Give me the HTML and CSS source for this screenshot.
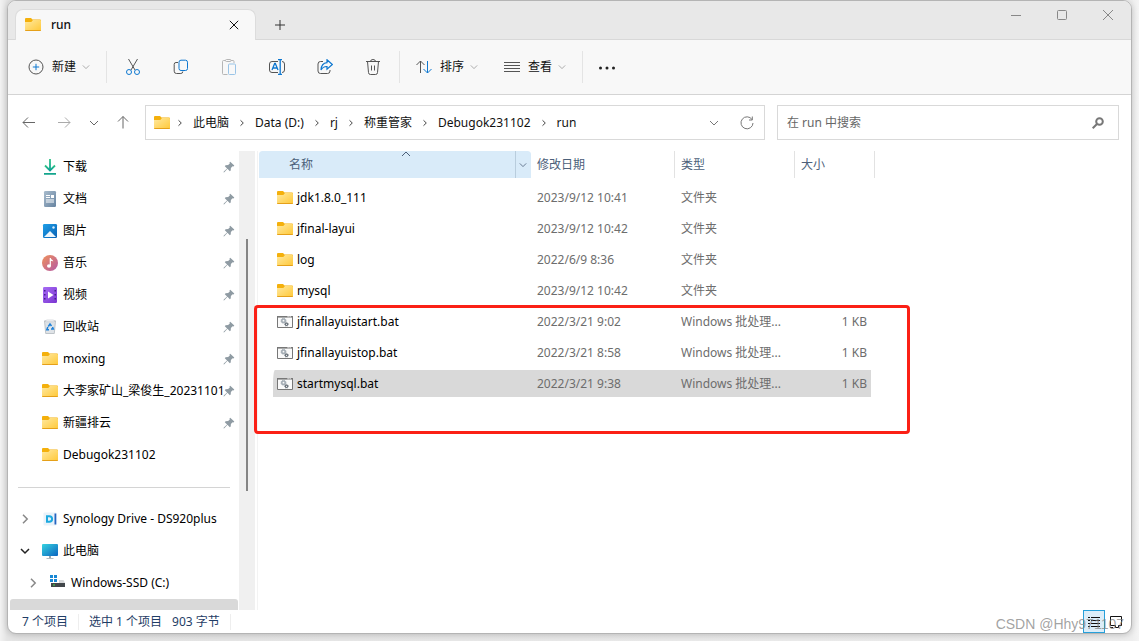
FILE: index.html
```html
<!DOCTYPE html>
<html lang="zh-CN">
<head>
<meta charset="utf-8">
<title>run</title>
<link rel="stylesheet" href="styles.css">
</head>
<body>
<svg class="defs" aria-hidden="true">
  <defs>
    <linearGradient id="gFolder" x1="0" y1="0" x2="1" y2="1"><stop offset="0" stop-color="#ffe9a0"/><stop offset="1" stop-color="#ffc837"/></linearGradient>
    <linearGradient id="gDown" x1="0" y1="0" x2="0" y2="1"><stop offset="0" stop-color="#2fc486"/><stop offset="1" stop-color="#0f9f96"/></linearGradient>
    <linearGradient id="gDoc" x1="0" y1="0" x2="1" y2="1"><stop offset="0" stop-color="#a9bccd"/><stop offset="1" stop-color="#6683a0"/></linearGradient>
    <linearGradient id="gPic" x1="0" y1="0" x2="1" y2="1"><stop offset="0" stop-color="#1fa0e8"/><stop offset="1" stop-color="#0860b4"/></linearGradient>
    <linearGradient id="gMusic" x1="0" y1="0" x2="1" y2="1"><stop offset="0" stop-color="#f0915a"/><stop offset="1" stop-color="#b45aa6"/></linearGradient>
    <linearGradient id="gVideo" x1="0" y1="0" x2="1" y2="1"><stop offset="0" stop-color="#a76cf5"/><stop offset="1" stop-color="#7a35d0"/></linearGradient>
    <linearGradient id="gPc" x1="0" y1="0" x2="1" y2="1"><stop offset="0" stop-color="#35d3e0"/><stop offset="1" stop-color="#0c64c0"/></linearGradient>
    <symbol id="folder" viewBox="0 0 16 16"><path d="M0 2a1 1 0 0 1 1-1h5l1.500 1.500H15a1 1 0 0 1 1 1V12H0z" fill="#f4b00c"/><path d="M0 5h6.300L8 3h7a1 1 0 0 1 1 1v9a1 1 0 0 1-1 1H1a1 1 0 0 1-1-1z" fill="url(#gFolder)"/><path d="M0 13h16a1 1 0 0 1-1 1H1a1 1 0 0 1-1-1z" fill="#e5a019"/></symbol>
    <symbol id="pin" viewBox="0 0 12 12"><path d="M7.2.8 11.3 4.6 10.5 5.4 9.6 5.2 7.9 7 7.7 9.4 6.8 10.2 4.5 7.8 1.3 11.2.5 11.5.8 10.6 4.1 7.4 1.8 5.2 2.6 4.3 5.1 4.1 6.8 2.4 6.5 1.5z" fill="#8f9ba3"/></symbol>
    <symbol id="right" viewBox="0 0 10 10"><path d="M3 .8 7.2 5 3 9.2"/></symbol>
    <symbol id="crumb" viewBox="0 0 8 8"><path d="M2.500 1.300 5.300 4 2.500 6.700"/></symbol>
    <symbol id="down" viewBox="0 0 10 10"><path d="M1 3l4 4 4-4"/></symbol>
    <symbol id="bat" viewBox="0 0 16 16"><path d="M.5 2.500h15v11H.5z" fill="#fafafa" stroke="#777"/><path d="M0 2h16v1.600H0z" fill="#777"/><path d="M10.500 2.300h1.200v1h-1.200zM12.500 2.300h1.200v1h-1.200z" fill="#fff"/><circle cx="6.500" cy="6.700" r="1.700" fill="none" stroke="#a4adb5" stroke-width="1.600"/><circle cx="6.500" cy="6.700" r="2.500" fill="none" stroke="#a4adb5" stroke-dasharray="1 1"/><circle cx="9.500" cy="10.300" r="1.200" fill="none" stroke="#6b747c" stroke-width="1.200"/><circle cx="9.500" cy="10.300" r="1.900" fill="none" stroke="#6b747c" stroke-width=".7" stroke-dasharray=".8 .8"/></symbol>
  </defs>
</svg>

<div class="window">
  <header class="titlebar">
    <div class="tab">
      <svg class="icon"><use href="#folder"/></svg>
      <span class="tab-title">run</span>
      <button class="plain" aria-label="关闭标签页"><svg class="line small" viewBox="0 0 10 10"><path d="M.8.8l8.400 8.400M9.200.8.8 9.200"/></svg></button>
    </div>
    <button class="plain new-tab" aria-label="新标签页"><svg class="line small" viewBox="0 0 10 10"><path d="M5 0v10M0 5h10"/></svg></button>
    <div class="controls">
      <button class="plain" aria-label="最小化"><svg class="line small" viewBox="0 0 10 10"><path d="M0 5.500h10"/></svg></button>
      <button class="plain" aria-label="最大化"><svg class="line small" viewBox="0 0 10 10"><rect x=".5" y=".5" width="9" height="9" rx="1"/></svg></button>
      <button class="plain" aria-label="关闭"><svg class="line small" viewBox="0 0 10 10"><path d="M0 0l10 10M10 0 0 10"/></svg></button>
    </div>
  </header>

  <div class="toolbar">
    <button class="tool labelled new"><svg class="line" viewBox="0 0 16 16"><circle cx="8" cy="8" r="7"/><path class="blue" d="M8 4.800v6.400M4.800 8h6.400"/></svg>新建<svg class="line tiny"><use href="#down"/></svg></button>
    <div class="tools">
      <button class="tool" aria-label="剪切"><svg class="line" viewBox="0 0 16 16"><path d="M3.500 0 10 11M12.500 0 6 11"/><g class="blue"><circle cx="4" cy="13" r="2.500"/><circle cx="12" cy="13" r="2.500"/></g></svg></button>
      <button class="tool" aria-label="复制"><svg class="line" viewBox="0 0 16 16"><path d="M5 3.500H3A1.800 1.800 0 0 0 1.200 5.300v6.900A2.300 2.300 0 0 0 3.500 14.500h4.300a2 2 0 0 0 2-2"/><rect class="blue" x="6" y="1.200" width="8.500" height="10.300" rx="2"/></svg></button>
      <button class="tool" aria-label="粘贴" disabled><svg class="line" viewBox="0 0 16 16"><path d="M6.500 15.500h-4a1 1 0 0 1-1-1v-12a1 1 0 0 1 1-1h2M10 1.500h2a1 1 0 0 1 1 1V4"/><rect x="4.500" y=".5" width="5.500" height="2" rx="1"/><rect class="blue" x="7.500" y="5" width="7" height="10.500" rx="1"/></svg></button>
      <button class="tool" aria-label="重命名"><svg class="line" viewBox="0 0 16 16"><path d="M9 2.500H3A2.500 2.500 0 0 0 .500 5v6A2.500 2.500 0 0 0 3 13.500h6M13 2.500a2.500 2.500 0 0 1 2.500 2.500v6a2.500 2.500 0 0 1-2.500 2.500"/><path class="blue" stroke-width="1.300" d="M3 11l2.700-6.500h.6L9 11M4 9h4M9 .500h4M9 15.500h4M11.200.5v15"/></svg></button>
      <button class="tool" aria-label="共享"><svg class="line" viewBox="0 0 16 16"><path d="M6 2.500H3.500A2.500 2.500 0 0 0 1 5v7a2.500 2.500 0 0 0 2.500 2.500h7A2.500 2.500 0 0 0 13 12v-1"/><path class="blue" stroke-width="1.200" d="M10 .8 15.300 5.500 10 10.200V7.500C7.500 7.300 5.500 8.500 4 11 4.200 7 6 3.900 10 3.600z"/></svg></button>
      <button class="tool" aria-label="删除"><svg class="line" viewBox="0 0 16 16"><path d="M1 2.500h14M5.500 2.500a2.500 2 0 0 1 5 0M2.500 2.500l1 11a2 2 0 0 0 2 2h5a2 2 0 0 0 2-2l1-11M6.500 6.500v5M9.500 6.500v5"/></svg></button>
    </div>
    <div class="views">
      <button class="tool labelled"><svg class="line" viewBox="0 0 16 16"><path d="M4.500 14V2M.5 6l4-4 4 4"/><path class="blue" d="M11.500 2v12M7.500 10l4 4 4-4"/></svg>排序<svg class="line tiny"><use href="#down"/></svg></button>
      <button class="tool labelled"><svg class="line" viewBox="0 0 16 16"><path d="M0 3.500h16M0 6.500h16M0 9.500h16M0 12.500h16"/></svg>查看<svg class="line tiny"><use href="#down"/></svg></button>
    </div>
    <button class="tool more" aria-label="更多"><svg viewBox="0 0 16 16"><circle cx="1.500" cy="9" r="1.500"/><circle cx="8" cy="9" r="1.500"/><circle cx="14.500" cy="9" r="1.500"/></svg></button>
  </div>

  <div class="navbar">
    <nav class="history" aria-label="导航">
      <button class="plain" aria-label="后退"><svg class="line" viewBox="0 0 16 16"><path d="M14 7.500H2M7 2.500l-5 5 5 5"/></svg></button>
      <button class="plain forward" aria-label="前进" disabled><svg class="line" viewBox="0 0 16 16"><path d="M2 7.500h12M9 2.500l5 5-5 5"/></svg></button>
      <button class="plain recent" aria-label="最近"><svg class="line small" viewBox="0 0 10 10"><path d="M1 3l4 4 4-4"/></svg></button>
      <button class="plain up" aria-label="向上"><svg class="line" viewBox="0 0 16 16"><path d="M8 13.500v-12M3 6.500l5-5 5 5"/></svg></button>
    </nav>
    <div class="address">
      <svg class="icon"><use href="#folder"/></svg>
      <svg class="line sep"><use href="#crumb"/></svg><a href="#">此电脑</a>
      <svg class="line sep"><use href="#crumb"/></svg><a href="#">Data (D:)</a>
      <svg class="line sep"><use href="#crumb"/></svg><a href="#">rj</a>
      <svg class="line sep"><use href="#crumb"/></svg><a href="#">称重管家</a>
      <svg class="line sep"><use href="#crumb"/></svg><a href="#">Debugok231102</a>
      <svg class="line sep"><use href="#crumb"/></svg><a href="#">run</a>
      <div class="address-actions">
        <button class="plain" aria-label="历史"><svg class="line small"><use href="#down"/></svg></button>
        <button class="plain" aria-label="刷新"><svg class="line" viewBox="0 0 16 16"><path d="M13 4.500A6 6 0 1 0 14 8M13.300 1.500v3.500H10"/></svg></button>
      </div>
    </div>
    <label class="search">
      <input type="text" placeholder="在 run 中搜索" aria-label="在 run 中搜索">
      <svg class="line" viewBox="0 0 16 16"><g class="thick"><circle cx="9.500" cy="6.500" r="3.300"/><path d="M7 9l-4.300 4.300"/></g></svg>
    </label>
  </div>

  <main class="main">
    <aside class="sidebar">
      <ul class="tree">
        <li><svg class="icon" viewBox="0 0 16 16"><path d="M3 6.500 8 11.500l5-5" fill="none" stroke="url(#gDown)" stroke-width="1.800"/><path d="M7.100 0h1.800v11H7.100z" fill="url(#gDown)"/><path d="M2 14h12v1.800H2z" fill="#13a58d"/></svg><span>下载</span><svg class="pin"><use href="#pin"/></svg></li>
        <li><svg class="icon" viewBox="0 0 16 16"><rect x="2" width="12" height="16" rx="1.200" fill="url(#gDoc)"/><path d="M4 4h4v1H4zM4 6h4v1H4zM9 4h3v3H9zM4 8.500h8v1H4zM4 10.500h8v1H4z" fill="#fff"/></svg><span>文档</span><svg class="pin"><use href="#pin"/></svg></li>
        <li><svg class="icon" viewBox="0 0 16 16"><rect x="1" y="1" width="14" height="14" rx="1.200" fill="url(#gPic)"/><path d="M2 14 8 8l6 6z" fill="#eef7fd"/><circle cx="11.500" cy="4.500" r="1.200" fill="#d8f0ff"/></svg><span>图片</span><svg class="pin"><use href="#pin"/></svg></li>
        <li><svg class="icon" viewBox="0 0 16 16"><circle cx="8" cy="8" r="8" fill="url(#gMusic)"/><ellipse cx="7" cy="11" rx="2" ry="1.700" fill="#fff"/><path d="M7.700 3h1.200c0 2 2.300 1.500 2.300 3.600-1-.7-2-.6-2.300-.6v5H7.700z" fill="#fff"/></svg><span>音乐</span><svg class="pin"><use href="#pin"/></svg></li>
        <li><svg class="icon" viewBox="0 0 16 16"><rect x="1" y="0" width="14" height="16" rx="1.200" fill="url(#gVideo)"/><path d="M2 3h1.500v1.500H2zM2 7h1.500v1.500H2zM2 11h1.500v1.500H2zM12.500 3H14v1.500h-1.500zM12.500 7H14v1.500h-1.500zM12.500 11H14v1.500h-1.500z" fill="#43208a"/><path d="M6 4.500 11.500 8 6 11.500z" fill="#fff"/></svg><span>视频</span><svg class="pin"><use href="#pin"/></svg></li>
        <li><svg class="icon" viewBox="0 0 16 16"><path d="M2.500 2h11l-1.200 12.500H3.700z" fill="#dfe3e7" stroke="#a9b0b6" stroke-width=".7"/><path d="M2.500 2 5 1h6l2.500 1-2 .8h-7z" fill="#f8f9fa" stroke="#b5bbc0" stroke-width=".5"/><path d="M6.300 7.500 8 5l1.500 2M10.500 8l.8 2H9M7 10.800H4.800L5.800 8" fill="none" stroke="#1c80d8" stroke-width="1.500"/></svg><span>回收站</span><svg class="pin"><use href="#pin"/></svg></li>
        <li><svg class="icon"><use href="#folder"/></svg><span>moxing</span><svg class="pin"><use href="#pin"/></svg></li>
        <li><svg class="icon"><use href="#folder"/></svg><span>大李家矿山_梁俊生_20231101</span><svg class="pin"><use href="#pin"/></svg></li>
        <li><svg class="icon"><use href="#folder"/></svg><span>新疆排云</span><svg class="pin"><use href="#pin"/></svg></li>
        <li><svg class="icon"><use href="#folder"/></svg><span>Debugok231102</span></li>
      </ul>
      <hr>
      <ul class="tree drives">
        <li><svg class="line chevron faded"><use href="#right"/></svg><svg class="icon" viewBox="0 0 16 16"><rect x="1.500" y="1.500" width="13" height="13" rx="1" fill="#e9f2f9"/><path d="M12.500 2.500h1.800v11h-1.800z" fill="#2563c0"/><path d="M5 5.200h2.300a2.800 2.800 0 0 1 0 5.600H5z" fill="none" stroke="#1da9df" stroke-width="2"/></svg><span>Synology Drive - DS920plus</span></li>
        <li><svg class="line chevron"><use href="#down"/></svg><svg class="icon" viewBox="0 0 16 16"><rect y="1" width="16" height="12" rx="1" fill="url(#gPc)"/><path d="M7 13h2v2h2.500v.8h-7V15H7z" fill="#9aa5ad"/></svg><span>此电脑</span></li>
        <li class="child"><svg class="line chevron faded"><use href="#right"/></svg><svg class="icon" viewBox="0 0 16 16"><path d="M0 0h3v3H0zM4 0h3v3H4zM0 4h3v3H0zM4 4h3v3H4z" fill="#1787d4"/><path d="M9 5h4.500L15 8H9z" fill="#d5d7d9"/><path d="M1 8h14v4H1z" fill="#41464a"/><path d="M3 9.500h2v1H3z" fill="#45df4b"/></svg><span>Windows-SSD (C:)</span></li>
        <li class="current"></li>
      </ul>
    </aside>
    <div class="scrollbar"><div class="thumb"></div></div>

    <section class="files">
      <table>
        <colgroup><col class="c-name"><col class="c-date"><col class="c-type"><col class="c-size"></colgroup>
        <thead>
          <tr>
            <th class="sorted"><div class="head"><svg class="line sort-mark" viewBox="0 0 10 6"><path d="M1 5l4-4 4 4"/></svg><span>名称</span><button class="plain filter" aria-label="筛选"><svg class="line tiny"><use href="#down"/></svg></button></div></th>
            <th>修改日期</th><th>类型</th><th>大小</th>
          </tr>
        </thead>
        <tbody>
          <tr><td><div class="name"><svg class="icon"><use href="#folder"/></svg>jdk1.8.0_111</div></td><td>2023/9/12 10:41</td><td>文件夹</td><td></td></tr>
          <tr><td><div class="name"><svg class="icon"><use href="#folder"/></svg>jfinal-layui</div></td><td>2023/9/12 10:42</td><td>文件夹</td><td></td></tr>
          <tr><td><div class="name"><svg class="icon"><use href="#folder"/></svg>log</div></td><td>2022/6/9 8:36</td><td>文件夹</td><td></td></tr>
          <tr><td><div class="name"><svg class="icon"><use href="#folder"/></svg>mysql</div></td><td>2023/9/12 10:42</td><td>文件夹</td><td></td></tr>
          <tr><td><div class="name"><svg class="icon"><use href="#bat"/></svg>jfinallayuistart.bat</div></td><td>2022/3/21 9:02</td><td>Windows 批处理...</td><td>1 KB</td></tr>
          <tr><td><div class="name"><svg class="icon"><use href="#bat"/></svg>jfinallayuistop.bat</div></td><td>2022/3/21 8:58</td><td>Windows 批处理...</td><td>1 KB</td></tr>
          <tr class="selected"><td><div class="name"><svg class="icon"><use href="#bat"/></svg>startmysql.bat</div></td><td>2022/3/21 9:38</td><td>Windows 批处理...</td><td>1 KB</td></tr>
        </tbody>
      </table>
      <div class="highlight"></div>
    </section>
  </main>

  <footer class="status">
    <span class="count">7 个项目</span>
    <span class="chosen">选中 1 个项目</span>
    <span class="bytes">903 字节</span>
    <div class="modes">
      <button class="mode active" aria-label="详细信息"><svg class="line" viewBox="0 0 14 14"><path d="M1 2.500h2M4 2.500h9M1 5.500h2M4 5.500h9M1 8.500h2M4 8.500h9M1 11.500h2M4 11.500h9"/></svg></button>
      <button class="mode" aria-label="大图标"><svg class="line" viewBox="0 0 14 14"><path d="M1.500 1.500h11v9h-3v2h-3v-2h-5zM1 12.500h3"/></svg></button>
    </div>
  </footer>
  <div class="watermark">CSDN @Hhy971107</div>
</div>
</body>
</html>
```
FILE: styles.css
```css
* { box-sizing: border-box; }

body {
  margin: 0;
  height: 100vh;
  padding: 0 7px 7px;
  background: linear-gradient(90deg, #f2f2f2, #e4e4e4 7px, #eee calc(100% - 7px), #f4f4f4);
  color: #111;
  font: 12px/16px "Noto Sans", "Noto Sans CJK SC", sans-serif;
}

.defs { position: absolute; width: 0; height: 0; }

.window {
  position: relative;
  display: flex;
  flex-direction: column;
  height: 100%;
  overflow: hidden;
  border: 1px solid #b4b4b4;
  border-radius: 9px;
  background: #fff;
  box-shadow: 0 1px 6px #0003;
}

button { border: 0; padding: 0; background: none; color: inherit; font: inherit; }
a { color: inherit; text-decoration: none; }
.icon { width: 16px; height: 16px; flex: none; }
.line { width: 16px; height: 16px; flex: none; fill: none; stroke: currentColor; }
.line.small { width: 10px; height: 10px; }
.line.tiny { width: 8px; height: 8px; }
.blue { stroke: #0f78d0; }
.thick { stroke-width: 2; }
.plain { display: flex; align-items: center; justify-content: center; }

.titlebar {
  display: flex;
  height: 39px;
  flex: none;
  padding: 8px 0 0 7px;
  background: #e8e8e8;
  box-shadow: inset 0 -1px #d8d8d8;
}
.tab {
  display: flex;
  align-items: center;
  width: 241px;
  padding: 0 16px 0 9px;
  border: 1px solid #dcdcdc;
  border-bottom: 0;
  border-radius: 8px 8px 0 0;
  background: #f8f8f8;
}
.tab-title { flex: 1; padding-left: 10px; font-weight: 500; }
.new-tab { width: 48px; color: #333; }
.controls { display: flex; margin-left: auto; height: 12px; color: #888; }
.controls button { width: 46px; }

.toolbar {
  display: flex;
  align-items: center;
  height: 55px;
  flex: none;
  padding-left: 20px;
  border-bottom: 1px solid #d4d4d4;
  background: #f8f8f8;
  color: #111;
}
.tool { display: flex; align-items: center; justify-content: center; width: 48px; height: 32px; }
.tool .line { color: #555; }
.tool:disabled { opacity: 0.4; }
.tool.labelled { width: 88px; gap: 8px; }
.tool.labelled .tiny { margin-left: -2px; color: #999; }
.tool.new { width: 78px; justify-content: flex-start; }
.tools, .views { display: flex; border-left: 1px solid #e4e4e4; }
.tools { padding: 0 2px; }
.views { padding: 0 3px; border-right: 1px solid #e4e4e4; }
.more svg { width: 16px; height: 16px; fill: #222; }

.navbar { display: flex; flex: none; gap: 12px; padding: 10px 12px 11px 0; }
.history { display: flex; align-items: center; width: 125px; padding-left: 5px; color: #666; }
.history .plain { width: 32px; flex: none; }
.history .forward { width: 38px; color: #aaa; }
.history .recent { width: 22px; }
.history .up { width: 36px; }
.address, .search {
  display: flex;
  align-items: center;
  height: 35px;
  border: 1px solid #d9d9d9;
  background: #fff;
}
.address { flex: 601; padding: 0 9px 0 8px; }
.address a { padding: 0 9px; }
.sep { width: 8px; height: 8px; color: #444; }
.address .icon { margin-right: 6px; }
.address-actions { display: flex; gap: 20px; margin-left: auto; color: #777; }
.search { flex: 319; padding: 0 12px 0 9px; color: #777; }
.search input { flex: 1; min-width: 0; border: 0; padding: 0; outline: 0; background: none; font: inherit; }
.search input::placeholder { color: #666; opacity: 1; }

.main { display: flex; flex: 1; min-height: 0; }
.sidebar { width: 231px; overflow: hidden; color: #000; }
.tree { margin: 0; padding: 0; list-style: none; }
.tree li { display: flex; align-items: center; height: 32px; padding: 0 4px 0 34px; }
.tree span { flex: 1; min-width: 0; padding-left: 5px; overflow: hidden; white-space: nowrap; }
.pin { width: 12px; height: 12px; flex: none; }
.sidebar hr { height: 1px; margin: 16px 9px 15px 10px; border: 0; background: #d4d4d4; }
.drives li { padding-left: 12px; }
.drives li.child { padding-left: 20px; }
.drives li.current { height: 24px; margin: 0 1px 0 2px; border-radius: 3px; background: #d9d9d9; }
.chevron { width: 10px; height: 10px; margin-right: 12px; color: #222; stroke-width: 1.5; }
.faded { color: #888; }
.scrollbar { width: 16px; padding: 88px 0 0 7px; background: #f0f0f0; }
.thumb { width: 2px; height: 252px; background: #858585; }

.files { position: relative; flex: 1; margin-left: 2px; padding-left: 1px; border-left: 1px solid #f3f3f3; }
table { width: 616px; table-layout: fixed; border-spacing: 0; color: #6d6d6d; }
.c-name { width: 272px; }
.c-date { width: 144px; }
.c-type { width: 120px; }
.c-size { width: 80px; }
th, td { height: 31px; padding: 0 0 0 6px; text-align: left; white-space: nowrap; background-clip: padding-box; }
th {
  border: 0 solid transparent;
  border-bottom-width: 4px;
  background-image: linear-gradient(#e2e2e2, #e2e2e2);
  background-position: right;
  background-size: 1px 100%;
  background-repeat: no-repeat;
  color: #4c607a;
  font-weight: 400;
}
th.sorted { padding: 0; border-radius: 3px; background: #d9ebf9 padding-box; }
.head { position: relative; display: flex; align-items: center; height: 27px; padding-left: 30px; }
.head span { flex: 1; }
.filter { width: 16px; height: 27px; padding-right: 2px; border-left: 1px solid #b9cddd; }
.sort-mark { position: absolute; top: 0; left: 142px; width: 10px; height: 6px; }
td { border: 0 solid transparent; border-width: 2px 0; }
td:first-child { padding-left: 4px; border-left-width: 14px; border-radius: 16px 0 0 4px; }
td:last-child { padding-right: 4px; border-right-width: 4px; text-align: right; }
.name { display: flex; align-items: center; gap: 4px; color: #000; }
.selected td { background-color: #d9d9d9; }
.highlight {
  position: absolute;
  top: 154px;
  left: -4px;
  width: 656px;
  height: 129px;
  border: 3px solid #fb2016;
  border-radius: 4px;
}

.status { display: flex; align-items: center; height: 23px; flex: none; padding-left: 14px; color: #1f3d66; }
.count { padding-right: 10px; border-right: 1px solid #eee; }
.chosen { padding: 0 10px; }
.bytes { padding-right: 10px; border-right: 1px solid #eee; }
.modes { display: flex; margin: 0 4px 0 auto; }
.mode { display: flex; align-items: center; justify-content: center; width: 22px; height: 23px; color: #111; }
.mode .line { width: 14px; height: 14px; }
.mode.active { border: 1px solid #26a0da; background: #dcedf8; }
.watermark { position: absolute; right: 7px; bottom: 1px; color: #808080bb; font: 14px/16px "Liberation Sans", sans-serif; }
```
